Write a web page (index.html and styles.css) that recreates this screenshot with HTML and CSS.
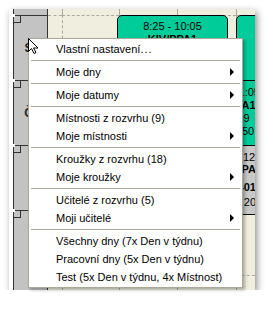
FILE: index.html
```html
<!doctype html>
<html>
<head>
<title>Rozvrh - kontextová nabídka</title>
<link rel="stylesheet" href="styles.css">
</head>
<body>

<div class="window">
  <div class="days">
    <div class="day first">St</div>
    <div class="day">Čt</div>
    <div class="day"></div>
    <div class="day"></div>
  </div>

  <div class="plan">
    <div class="cells">
      <div></div><div></div><div></div><div></div><div></div>
      <div></div><div></div><div></div><div></div><div></div>
      <div></div><div></div><div></div><div></div><div></div>
      <div></div><div></div><div></div><div></div><div></div>
      <div></div><div></div><div></div><div></div><div></div>
      <div></div><div></div><div></div><div></div><div></div>
    </div>

    <!-- rozvrhove akce, poloha podle casu a dne -->
    <div class="event green ev-a">
      <div>8:25 - 10:05</div>
      <div><b>KIV/PPA1</b></div>
    </div>
    <div class="event green ev-b"></div>
    <div class="event green ev-c">
      <div>9:45 - 11:05</div>
      <div><b>KIV/PPA1</b></div>
      <div>UN 309</div>
      <div>Počet: 50</div>
    </div>
    <div class="event gray ev-d">
      <div>10:40 - 12:20</div>
      <div><b>KIV/PA</b></div>
      <div class="room"><b>UL 401</b></div>
      <div class="cap">kap. 20</div>
    </div>
  </div>
</div>

<div class="menu">
  <div class="item">Vlastní nastavení<span class="dots">...</span></div>
  <div class="sep"></div>
  <div class="item sub">Moje dny</div>
  <div class="sep"></div>
  <div class="item sub">Moje datumy</div>
  <div class="sep"></div>
  <div class="item">Místnosti z rozvrhu (9)</div>
  <div class="item sub">Moje místnosti</div>
  <div class="sep"></div>
  <div class="item">Kroužky z rozvrhu (18)</div>
  <div class="item sub">Moje kroužky</div>
  <div class="sep"></div>
  <div class="item">Učitelé z rozvrhu (5)</div>
  <div class="item sub">Moji učitelé</div>
  <div class="sep"></div>
  <div class="item">Všechny dny (7x Den v týdnu)</div>
  <div class="item">Pracovní dny (5x Den v týdnu)</div>
  <div class="item">Test (5x Den v týdnu, 4x Místnost)</div>
</div>

<svg class="cursor" width="12" height="17" viewBox="0 0 12 17">
  <path d="M0.5 0.5 V13.5 L3.5 10.5 L6 15.5 L8 14.5 L5.5 10 H10 Z" fill="#fff" stroke="#000" stroke-width="1" stroke-linejoin="miter"/>
</svg>

</body>
</html>
```

FILE: styles.css
```css
/*
  Okno rozvrhu s otevrenou kontextovou nabidkou
*/

body {
  margin: 0;
  background: #fff;
  font-family: "Liberation Sans", Arial, sans-serif;
  font-size: 11px;
  color: #000;
}

.window {
  margin: 9px 0 0 9px;
  width: 246px;
  height: 281px;
  padding-left: 4px;
  box-sizing: border-box;
  display: flex;
  background: #fff;
  overflow: hidden;
  box-shadow: 2px 3px 7px rgba(0,0,0,0.45);
}

/* sloupec s dny */
.days {
  width: 35px;
  flex: none;
  box-sizing: border-box;
  padding-top: 6px;
  background: #c3c3c3;
  border-left: 1px solid #333;
  border-right: 1px solid #333;
}

.day {
  height: 65px;
  box-sizing: border-box;
  border-top: 1px solid #333;
  position: relative;
  display: flex;
  align-items: center;
  justify-content: center;
  font-weight: bold;
  font-size: 12px;
  color: #222;
}

.day::before {
  content: "";
  position: absolute;
  left: 0;
  top: 0;
  width: 6px;
  height: 6px;
  border-right: 1px solid #333;
  border-bottom: 1px solid #333;
}

.day::after {
  content: "";
  position: absolute;
  left: -1px;
  top: -2px;
  width: 2px;
  height: 3px;
  background: #fff;
}

/* plocha s mrizkou */
.plan {
  flex: 1;
  position: relative;
  background: #f0efdf;
}

.cells {
  height: 100%;
  display: grid;
  grid-template-columns: 14px 57px 58px 59px 1fr;
  grid-template-rows: 6px repeat(4, 65px) 1fr;
}

.cells div {
  border-left: 1px dashed #a9a9a0;
  border-top: 1px dashed #a9a9a0;
}

.cells div:nth-child(5n+1) {
  border-left: none;
}

.cells div:nth-child(-n+5) {
  border-top: none;
}

.event {
  position: absolute;
  box-sizing: border-box;
  border: 1px solid #000;
  padding-top: 4px;
  line-height: 13px;
  text-align: center;
  white-space: nowrap;
  overflow: hidden;
}

.green {
  background: #00cc99;
}

.gray {
  background: #c8c8c8;
}

.ev-a {
  left: 69px;
  top: 6px;
  width: 111px;
  height: 66px;
  border-radius: 5px 5px 0 0;
}

.ev-b {
  left: 188px;
  top: 6px;
  width: 60px;
  height: 66px;
  border-radius: 5px 0 0 0;
}

.ev-c {
  left: 131px;
  top: 71px;
  width: 104px;
  height: 66px;
  padding-top: 5px;
}

.ev-d {
  left: 138px;
  top: 136px;
  width: 104px;
  height: 70px;
  padding-top: 5px;
  line-height: 12px;
}

.ev-d .room {
  margin-top: 6px;
}

.ev-d .cap {
  margin-top: 3px;
}

/* kontextova nabidka */
.menu {
  position: absolute;
  left: 28px;
  top: 38px;
  width: 215px;
  box-sizing: border-box;
  padding: 1px 0;
  background: #fff;
  border: 1px solid #aca899;
  box-shadow: 2px 2px 3px rgba(0,0,0,0.3);
}

.item {
  height: 18px;
  line-height: 18px;
  padding: 0 8px 0 27px;
  display: flex;
  align-items: center;
  justify-content: space-between;
  white-space: nowrap;
}

.dots {
  flex: 1;
  letter-spacing: 1px;
}

.sub::after {
  content: "";
  width: 0;
  height: 0;
  border-left: 4px solid #000;
  border-top: 4px solid transparent;
  border-bottom: 4px solid transparent;
}

.sep {
  height: 1px;
  margin: 2px 2px;
  background: #aca899;
}

.cursor {
  position: absolute;
  left: 28px;
  top: 38px;
}
```
